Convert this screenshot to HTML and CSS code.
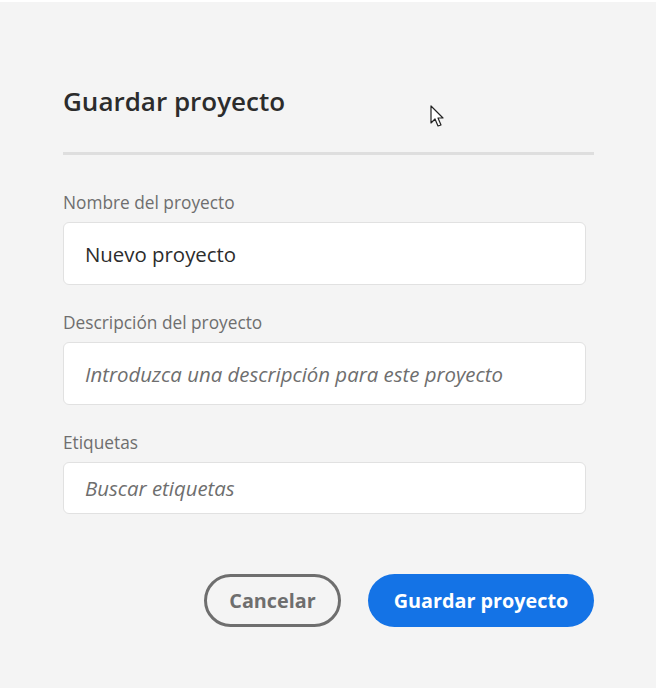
FILE: index.html
```html
<!DOCTYPE html>
<html lang="es">
<head>
<meta charset="utf-8">
<title>Guardar proyecto</title>
<link rel="stylesheet" href="styles.css">
</head>
<body>
<div class="dialog">
  <h1 class="title">Guardar proyecto</h1>
  <hr class="divider">
  <form class="form">
    <div class="field">
      <label class="label">Nombre del proyecto</label>
      <div class="input value">Nuevo proyecto</div>
    </div>
    <div class="field">
      <label class="label">Descripción del proyecto</label>
      <div class="input placeholder">Introduzca una descripción para este proyecto</div>
    </div>
    <div class="field">
      <label class="label">Etiquetas</label>
      <div class="input short placeholder">Buscar etiquetas</div>
    </div>
  </form>
  <div class="actions">
    <button class="btn secondary" type="button">Cancelar</button>
    <button class="btn primary" type="button">Guardar proyecto</button>
  </div>
  <svg class="cursor" width="16" height="24" viewBox="0 0 16 24">
    <path d="M1 1 L1 18 L5 14 L8 21 L11 20 L8 13 L13 13 Z" fill="#fff" stroke="#222" stroke-width="1.2" stroke-linejoin="round"/>
  </svg>
</div>
</body>
</html>
```

FILE: styles.css
```css
* { box-sizing: border-box; }
html, body { margin: 0; padding: 0; background: #ffffff; }
body { font-family: "Open Sans", "Noto Sans", sans-serif; }

.dialog {
  position: relative;
  background: #f4f4f4;
  margin: 2px 2px 0 0;
  height: 686px;
  padding: 79px 64px 0 63px;
}

.title {
  margin: 0;
  font-size: 26px;
  line-height: 40px;
  font-weight: 600;
  color: #2c2c2c;
  width: 531px;
}

.divider {
  margin: 31px 0 0 0;
  border: 0;
  height: 3px;
  background: #dedede;
  width: 531px;
}

.form { width: 523px; margin-top: 37px; }

.field { display: flex; flex-direction: column; }
.field + .field { margin-top: 27px; }

.label {
  font-size: 17.3px;
  line-height: 22px;
  color: #6e6e6e;
  margin-bottom: 8px;
}

.input {
  background: #fff;
  border: 1px solid #e1e1e1;
  border-radius: 6px;
  height: 63px;
  padding: 0 21px;
  display: flex;
  align-items: center;
  font-size: 20.4px;
}
.input.short { height: 52px; }
.value { color: #2c2c2c; }
.placeholder { color: #6e6e6e; font-style: italic; }

.actions {
  width: 531px;
  display: flex;
  justify-content: flex-end;
  gap: 27px;
  margin-top: 60px;
}

.btn {
  font-family: inherit;
  font-size: 19.8px;
  font-weight: 700;
  height: 53px;
  border-radius: 27px;
  cursor: pointer;
  padding: 0;
}
.secondary {
  background: transparent;
  border: 3px solid #6e6e6e;
  color: #6e6e6e;
  width: 137px;
}
.primary {
  background: #1473e6;
  border: 0;
  color: #fff;
  width: 226px;
}

.cursor {
  position: absolute;
  left: 430px;
  top: 103px;
}
```
